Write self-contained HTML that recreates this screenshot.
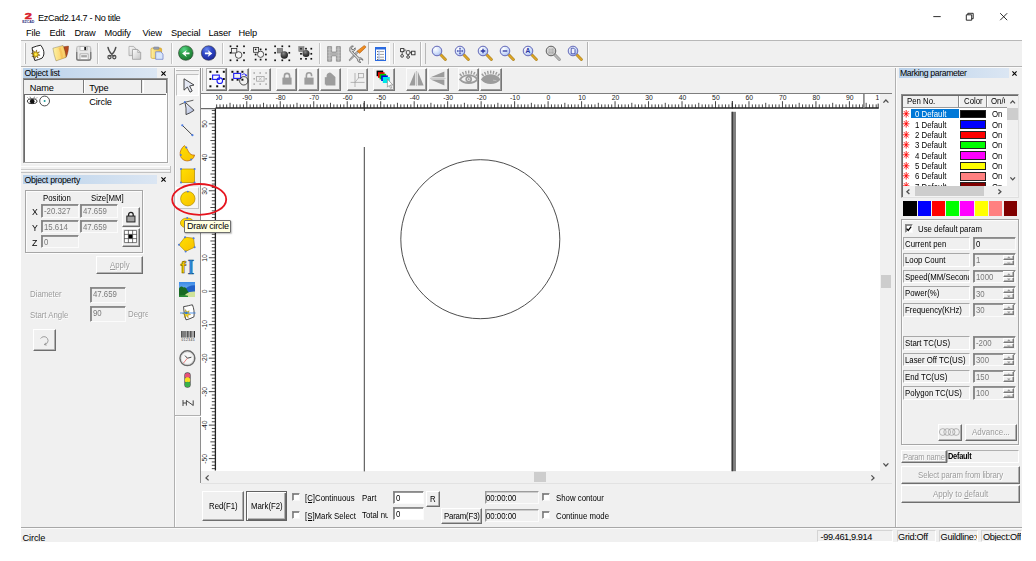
<!DOCTYPE html><html><head><meta charset="utf-8"><title>EzCad2.14.7 - No title</title><style>
html,body{margin:0;padding:0;}
body{width:1036px;height:561px;background:#fff;position:relative;overflow:hidden;font-family:"Liberation Sans",sans-serif;font-size:8.4px;color:#000;}
.a{position:absolute;}
.t{position:absolute;white-space:nowrap;line-height:1;}
.ui{font-family:"Liberation Sans",sans-serif;font-size:9.25px;letter-spacing:-0.15px;}
.ms{font-family:"Liberation Sans",sans-serif;font-size:8.6px;transform:scaleX(0.91);transform-origin:0 0;}
.dis{color:#9a9a9a;text-shadow:0.7px 0.7px 0 #fff;}
.gr{color:#7a7a7a;}
.sunk{position:absolute;box-sizing:border-box;border:1px solid;border-color:#9a9a9a #fff #fff #9a9a9a;box-shadow:inset 0.7px 0.7px 0 #6a6a6a;}
.inp{position:absolute;box-sizing:border-box;border:1px solid;border-color:#8a8a8a #fbfbfb #fbfbfb #8a8a8a;box-shadow:inset 0.8px 0.8px 0 #777;background:#f0f0f0;overflow:hidden;}
.inp.w{background:#fff;}
.inp span{position:absolute;left:2px;top:2.2px;white-space:nowrap;line-height:1;}
.btn{position:absolute;box-sizing:border-box;border:1px solid;border-color:#fff #6e6e6e #6e6e6e #fff;background:#f0f0f0;box-shadow:inset -0.8px -0.8px 0 #a0a0a0;text-align:center;white-space:nowrap;overflow:hidden;}
.lbl{position:absolute;box-sizing:border-box;border:1px solid;border-color:#a8a8a8 #fff #fff #a8a8a8;overflow:hidden;white-space:nowrap;}
.lbl span{position:absolute;left:1px;top:2.0px;line-height:1;}
.grp{position:absolute;box-sizing:border-box;border:1px solid #a6a6a6;box-shadow:0.8px 0.8px 0 #fff, inset 0.8px 0.8px 0 #fff;}
.cap{position:absolute;height:9.4px;background:linear-gradient(90deg,#b9d1ea 0%,#c9dbee 45%,#dbe6f3 100%);}
.cap span{position:absolute;left:1px;top:0.9px;line-height:1;white-space:nowrap;font-size:8.7px;letter-spacing:-0.25px;}
.hl{position:absolute;height:1px;}
.vl{position:absolute;width:1px;}
svg{position:absolute;overflow:visible;}
</style></head><body>
<div class="a" style="left:21px;top:40px;width:1001px;height:502px;background:#f0f0f0"></div>
<svg style="left:22px;top:10px" width="13" height="13" viewBox="0 0 13 13"><text transform="translate(6.4 8.8) scale(1.45 1)" x="0" y="0" text-anchor="middle" font-family="Liberation Sans" font-weight="bold" font-size="8.8" fill="#d8202c" stroke="#d8202c" stroke-width="0.5">2</text><text x="0.2" y="12.7" font-family="Liberation Sans" font-weight="bold" font-size="3.9" fill="#2a2a7a" textLength="12.2" lengthAdjust="spacingAndGlyphs">EZCAD</text></svg>
<div class="t ui" style="left:38px;top:13.9px;font-size:9.1px;letter-spacing:-0.3px">EzCad2.14.7 - No title</div>
<svg style="left:925px;top:8px" width="90" height="18" viewBox="0 0 90 18"><g stroke="#161616" stroke-width="0.9" fill="none"><path d="M8.3 8.6h7.4"/><path d="M41.3 6.8h5.4v5.4h-5.4z"/><path d="M42.8 6.8v-1.5h5.4v5.4h-1.5"/><path d="M75.2 5.2l7 7M82.2 5.2l-7 7"/></g></svg>
<div class="t ui" style="left:26px;top:28.5px;">File</div>
<div class="t ui" style="left:49.5px;top:28.5px;">Edit</div>
<div class="t ui" style="left:74.5px;top:28.5px;">Draw</div>
<div class="t ui" style="left:104.5px;top:28.5px;">Modify</div>
<div class="t ui" style="left:142.5px;top:28.5px;">View</div>
<div class="t ui" style="left:171px;top:28.5px;">Special</div>
<div class="t ui" style="left:208.5px;top:28.5px;">Laser</div>
<div class="t ui" style="left:238.5px;top:28.5px;">Help</div>
<div class="a" style="left:21px;top:40px;width:1001px;height:1px;background:#b8b8b8"></div>
<div class="a" style="left:21px;top:66px;width:1001px;height:1px;background:#b4b4b4"></div>
<div class="a" style="left:21px;top:67px;width:1001px;height:1px;background:#fafafa"></div>
<div class="cap" style="left:23.4px;top:68.2px;width:133.4px;height:9.4px;"><span class="ui">Object list</span></div>
<svg style="left:160.8px;top:71px" width="5" height="5" viewBox="0 0 5 5"><path d="M0.4 0.4l4.2 4.2M4.6 0.4l-4.2 4.2" stroke="#000" stroke-width="1.1"/></svg>
<div class="a" style="left:22.8px;top:78.2px;width:145.3px;height:84.6px;background:#fff;border:1px solid;border-color:#8c8c8c #a8a8a8 #a8a8a8 #8c8c8c;box-sizing:border-box;box-shadow:inset 1px 1px 0 #6a6a6a, 0.8px 0.8px 0 #fafafa"></div>
<div class="a" style="left:24.4px;top:80.4px;width:142px;height:13.4px;background:#f0f0f0"></div>
<div class="a" style="left:24.4px;top:93.6px;width:142px;height:1.2px;background:#6a6a6a"></div>
<div class="a" style="left:82.6px;top:80.4px;width:1.2px;height:13px;background:#7a7a7a"></div>
<div class="a" style="left:83.8px;top:80.4px;width:0.6px;height:13px;background:#fff"></div>
<div class="a" style="left:141.3px;top:80.4px;width:1.2px;height:13px;background:#7a7a7a"></div>
<div class="a" style="left:142.5px;top:80.4px;width:0.6px;height:13px;background:#fff"></div>
<div class="a" style="left:165.6px;top:80.4px;width:1px;height:13px;background:#7a7a7a"></div>
<div class="t ui" style="left:29.8px;top:84px;font-size:9.2px">Name</div>
<div class="t ui" style="left:89.2px;top:84px;font-size:9.2px">Type</div>
<div class="t ui" style="left:89.2px;top:98px;font-size:9.2px">Circle</div>
<svg style="left:27.4px;top:96px" width="24" height="11" viewBox="0 0 24 11"><ellipse cx="5.2" cy="5.2" rx="4.8" ry="2.4" fill="none" stroke="#111" stroke-width="0.9"/><circle cx="5.2" cy="5.2" r="2.3" fill="#111"/><path d="M1.5 2.5l-1-1M3.5 1.9l-.5-1.2M7 1.9l.5-1.2M9 2.5l1-1" stroke="#111" stroke-width="0.6"/><circle cx="17.6" cy="5" r="4.9" fill="#fff" stroke="#222" stroke-width="0.8"/><circle cx="17.6" cy="5" r="1" fill="#1a9a9a"/></svg>
<div class="a" style="left:21px;top:166px;width:150px;height:1px;background:#fdfdfd"></div>
<div class="a" style="left:21px;top:169px;width:150px;height:0.9px;background:#cccccc"></div>
<div class="a" style="left:21px;top:170px;width:150px;height:0.9px;background:#fbfbfb"></div>
<div class="a" style="left:21px;top:172px;width:150px;height:0.9px;background:#c2c2c2"></div>
<div class="a" style="left:170.4px;top:166px;width:0.9px;height:6.8px;background:#c0c0c0"></div>
<div class="cap" style="left:23.4px;top:175px;width:133.8px;height:9.4px;"><span class="ui">Object property</span></div>
<svg style="left:160.8px;top:177.2px" width="5" height="5" viewBox="0 0 5 5"><path d="M0.4 0.4l4.2 4.2M4.6 0.4l-4.2 4.2" stroke="#000" stroke-width="1.1"/></svg>
<div class="grp" style="left:24.5px;top:189.6px;width:118.6px;height:63px;"></div>
<div class="t ms" style="left:42.8px;top:194.2px;">Position</div>
<div class="t ms" style="left:91px;top:194.2px;">Size[MM]</div>
<div class="t ms" style="left:31.6px;top:207.4px;font-size:9.6px">X</div>
<div class="t ms" style="left:31.6px;top:222.6px;font-size:9.6px">Y</div>
<div class="t ms" style="left:31.8px;top:237.8px;font-size:9.6px">Z</div>
<div class="inp" style="left:40.5px;top:204.2px;width:38.4px;height:13.4px"><span class="ms gr">-20.327</span></div>
<div class="inp" style="left:80px;top:204.2px;width:38.4px;height:13.4px"><span class="ms gr">47.659</span></div>
<div class="inp" style="left:40.5px;top:219.6px;width:38.4px;height:13.4px"><span class="ms gr">15.614</span></div>
<div class="inp" style="left:80px;top:219.6px;width:38.4px;height:13.4px"><span class="ms gr">47.659</span></div>
<div class="inp" style="left:40.5px;top:235px;width:38.4px;height:13.4px"><span class="ms gr">0</span></div>
<div class="btn" style="left:122px;top:207.2px;width:17.8px;height:19.6px;"></div>
<svg style="left:126.4px;top:210.6px" width="10" height="12" viewBox="0 0 10 12"><path d="M2.6 5.2V3.6a2.3 2.3 0 0 1 4.6 0V5.2" fill="none" stroke="#222" stroke-width="1.3"/><rect x="0.8" y="5" width="8.2" height="6" fill="#8a8a8a" stroke="#222" stroke-width="0.9"/><path d="M1.6 7h6.6M1.6 9h6.6" stroke="#ddd" stroke-width="0.6"/></svg>
<div class="btn" style="left:122px;top:228px;width:17.8px;height:19.4px;"></div>
<svg style="left:124.2px;top:230px" width="13" height="13" viewBox="0 0 13 13"><rect x="0" y="0" width="13" height="13" fill="#fff"/><path d="M0.4 0.4h12.2v12.2h-12.2zM4.4 0v13M8.6 0v13M0 4.4h13M0 8.6h13" fill="none" stroke="#555" stroke-width="0.8"/><rect x="4.6" y="4.6" width="3.8" height="3.8" fill="#000"/></svg>
<div class="btn" style="left:96.2px;top:255.6px;width:47px;height:18.2px;"></div>
<div class="t ms dis" style="left:109.6px;top:260.6px;"><u>A</u>pply</div>
<div class="t ms dis" style="left:29.6px;top:290.4px;">Diameter</div>
<div class="inp" style="left:89.6px;top:287px;width:36.4px;height:16px"><span class="ms gr">47.659</span></div>
<div class="t ms dis" style="left:29.6px;top:311px;">Start Angle</div>
<div class="inp" style="left:89.6px;top:305.8px;width:36.4px;height:16px"><span class="ms gr">90</span></div>
<div class="a" style="left:128px;top:309.6px;width:19.5px;height:10px;overflow:hidden"><div class="t ms dis" style="left:0;top:0.6px">Degree</div></div>
<div class="btn" style="left:33px;top:328.8px;width:22.6px;height:22.4px;"></div>
<svg style="left:39px;top:335px" width="11" height="11" viewBox="0 0 11 11"><path d="M1.6 3.6A4 4 0 1 1 5.4 9.6" fill="none" stroke="#8a8a8a" stroke-width="0.8"/><path d="M5.4 9.6l1.6-2M5.4 9.6l2.2 0.6" fill="none" stroke="#8a8a8a" stroke-width="0.8"/></svg>
<div class="a" style="left:173.9px;top:68px;width:0.9px;height:459px;background:#b0b0b0"></div>
<div class="a" style="left:174.8px;top:68px;width:0.7px;height:459px;background:#fcfcfc"></div>
<div class="a" style="left:24px;top:42.6px;width:0.8px;height:21.5px;background:#fdfdfd"></div>
<div class="a" style="left:24.8px;top:42.6px;width:0.8px;height:21.5px;background:#b8b8b8"></div>
<svg style="left:24px;top:40px" width="80" height="28" viewBox="24 40 80 28"><defs><linearGradient id="fy" x1="0" y1="0" x2="1" y2="0"><stop offset="0" stop-color="#fdf3a4"/><stop offset="0.55" stop-color="#fbd978"/><stop offset="1" stop-color="#f7c964"/></linearGradient><linearGradient id="sv" x1="0" y1="0" x2="0" y2="1"><stop offset="0" stop-color="#c8c8c8"/><stop offset="1" stop-color="#8c8c8c"/></linearGradient><radialGradient id="st"><stop offset="0" stop-color="#fff27a"/><stop offset="0.45" stop-color="#f4cc00"/><stop offset="1" stop-color="#a06a00"/></radialGradient></defs>
<path d="M32.1 47.7C35 46.6 38 45.6 40.6 45.2C42.8 47.6 44.2 51 43.9 54C43.7 55.800 43 57.2 42.1 58.1C39.800 59.2 37.2 60.100 34.800 60.5C34.2 58.800 33.6 57 33.300 55.4C32.800 52.800 32.3 50 32.1 47.7z" fill="#fff" stroke="#1a1a1a" stroke-width="0.950" stroke-linejoin="round"/>
<path d="M36.64 49.90L36.78 52.73L39.47 51.85L37.57 53.95L40.10 55.24L37.27 55.38L38.15 58.07L36.05 56.17L34.76 58.70L34.62 55.87L31.93 56.75L33.83 54.65L31.30 53.36L34.13 53.22L33.25 50.53L35.35 52.43z" fill="url(#st)" stroke="#5a3a00" stroke-width="0.45"/>
<path d="M63.6 46.7L68.5 46.100C68.6 49.800 67.800 53.6 66.4 56.800L64 57.6z" fill="#b5481f" stroke="#6e2a10" stroke-width="0.4"/>
<path d="M52.900 48.2L63 45.4C64.6 49.2 65.700 53.300 66.100 57.4L56 60.900C54.6 56.800 53.5 52.5 52.900 48.2z" fill="url(#fy)" stroke="#3a3010" stroke-opacity="0.55" stroke-width="0.5" stroke-linejoin="round"/>
<path d="M59.5 47.6C61 51.2 61.900 55 62.2 58.6" fill="none" stroke="#f5b84a" stroke-opacity="0.6" stroke-width="2.2"/>
<rect x="76.700" y="46.4" width="14" height="13.800" rx="1.800" fill="#e8e8e8" stroke="url(#sv)" stroke-width="1.300"/>
<path d="M76.700 52V58.400a1.800 1.800 0 0 0 1.800 1.800h10.400a1.800 1.800 0 0 0 1.800-1.800V52" fill="none" stroke="#7c7c7c" stroke-width="1.300"/>
<rect x="80" y="46.700" width="7.400" height="4" fill="#fafafa" stroke="#9a9a9a" stroke-width="0.5"/>
<rect x="84.300" y="47" width="1.900" height="3.100" fill="#1a1a1a"/>
<rect x="80" y="53.900" width="8.100" height="5.500" fill="#fbfbfb" stroke="#8a8a8a" stroke-width="0.6"/>
<rect x="81.200" y="55.100" width="5.700" height="2.300" fill="#a8a8a8"/></svg>
<div class="a" style="left:96.7px;top:43px;width:0.9px;height:21px;background:#c4c4c4"></div>
<div class="a" style="left:97.60000000000001px;top:43px;width:0.7px;height:21px;background:#fdfdfd"></div>
<svg style="left:96px;top:40px" width="80" height="28" viewBox="96 40 80 28"><defs><linearGradient id="pg" x1="0" y1="0" x2="1" y2="1"><stop offset="0" stop-color="#fdfdfd"/><stop offset="1" stop-color="#c4c4c4"/></linearGradient><linearGradient id="cb" x1="0" y1="0" x2="1" y2="0"><stop offset="0" stop-color="#fff2a8"/><stop offset="1" stop-color="#e6b42c"/></linearGradient></defs>
<path d="M108 47.400C108.800 51 110.600 53.800 114 56M115.800 47.400C115 51 113.200 53.800 109.800 56" fill="none" stroke="#4c4c4c" stroke-width="1.500" stroke-linecap="round"/>
<ellipse cx="109.500" cy="57.100" rx="1.600" ry="1.700" fill="none" stroke="#4c4c4c" stroke-width="1.200"/><ellipse cx="114.300" cy="57.100" rx="1.600" ry="1.700" fill="none" stroke="#4c4c4c" stroke-width="1.200"/>
<path d="M129 46.400h4.600l2.600 2.600v6.600h-7.200z" fill="url(#pg)" stroke="#a4a4a4" stroke-width="0.800"/>
<path d="M132.500 49.500h5.200l3 3v6.800h-8.200z" fill="url(#pg)" stroke="#9c9c9c" stroke-width="0.800"/><path d="M137.700 49.500v3h3" fill="none" stroke="#9c9c9c" stroke-width="0.600"/>
<rect x="151" y="48" width="10.600" height="10.400" rx="1.300" fill="url(#cb)" stroke="#d0a030" stroke-width="0.700"/>
<rect x="153.600" y="47" width="5.400" height="2.300" rx="0.700" fill="#98a0b4" stroke="#6c7488" stroke-width="0.500"/>
<path d="M155.700 51.800h5l2.300 2.300v5.200h-7.300z" fill="#d8e6fb" stroke="#7484cc" stroke-width="0.800"/></svg>
<div class="a" style="left:170.9px;top:43px;width:0.9px;height:21px;background:#c4c4c4"></div>
<div class="a" style="left:171.8px;top:43px;width:0.7px;height:21px;background:#fdfdfd"></div>
<svg style="left:170px;top:40px" width="60" height="28" viewBox="170 40 60 28"><defs><radialGradient id="gg" cx="38%" cy="25%" r="75%"><stop offset="0" stop-color="#58d88a"/><stop offset="0.45" stop-color="#2fa04a"/><stop offset="1" stop-color="#1c7a34"/></radialGradient><radialGradient id="gb" cx="38%" cy="25%" r="75%"><stop offset="0" stop-color="#6a8af0"/><stop offset="0.45" stop-color="#3048c8"/><stop offset="1" stop-color="#1c2a9c"/></radialGradient></defs>
<circle cx="185.800" cy="53.050" r="7.300" fill="url(#gg)" stroke="#2a3a2a" stroke-width="0.600"/>
<path d="M182.100 53.400L186.700 49.900L185.600 52.500H189.500V54.300H185.600L186.700 56.900z" fill="#fff"/>
<circle cx="208.600" cy="53.050" r="7.300" fill="url(#gb)" stroke="#2a2a3a" stroke-width="0.600"/>
<path d="M212.300 53.400L207.700 49.900L208.800 52.500H204.900V54.300H208.800L207.700 56.900z" fill="#fff"/></svg>
<div class="a" style="left:222.0px;top:43px;width:0.9px;height:21px;background:#c4c4c4"></div>
<div class="a" style="left:222.9px;top:43px;width:0.7px;height:21px;background:#fdfdfd"></div>
<svg style="left:222px;top:40px" width="100" height="28" viewBox="222 40 100 28"><defs><radialGradient id="sp" cx="40%" cy="30%" r="70%"><stop offset="0" stop-color="#8a8a8a"/><stop offset="0.5" stop-color="#4a4a4a"/><stop offset="1" stop-color="#1e1e1e"/></radialGradient></defs><rect x="229.65" y="45.45" width="1.70" height="1.70" fill="#111"/><rect x="229.65" y="51.95" width="1.70" height="1.70" fill="#111"/><rect x="229.65" y="59.45" width="1.70" height="1.70" fill="#111"/><rect x="236.35" y="45.45" width="1.70" height="1.70" fill="#111"/><rect x="236.35" y="59.45" width="1.70" height="1.70" fill="#111"/><rect x="243.15" y="45.45" width="1.70" height="1.70" fill="#111"/><rect x="243.15" y="51.95" width="1.70" height="1.70" fill="#111"/><rect x="243.15" y="59.45" width="1.70" height="1.70" fill="#111"/><rect x="231.400" y="48.400" width="5.400" height="4.600" fill="#f2f2f2" stroke="#2a2a2a" stroke-width="0.800"/><circle cx="238.600" cy="55" r="3.300" fill="#f6f6f6" stroke="#2a2a2a" stroke-width="0.800"/><rect x="254.75" y="48.55" width="1.70" height="1.70" fill="#111"/><rect x="254.75" y="53.65" width="1.70" height="1.70" fill="#111"/><rect x="254.75" y="58.75" width="1.70" height="1.70" fill="#111"/><rect x="259.75" y="48.55" width="1.70" height="1.70" fill="#111"/><rect x="259.75" y="58.75" width="1.70" height="1.70" fill="#111"/><rect x="265.05" y="48.55" width="1.70" height="1.70" fill="#111"/><rect x="265.05" y="53.65" width="1.70" height="1.70" fill="#111"/><rect x="265.05" y="58.75" width="1.70" height="1.70" fill="#111"/><rect x="253.600" y="47.400" width="5" height="4.900" fill="#f2f2f2" stroke="#2a2a2a" stroke-width="0.800"/><rect x="254.900" y="48.700" width="1.500" height="1.500" fill="#111"/><circle cx="260.600" cy="54.300" r="3.100" fill="#f6f6f6" stroke="#2a2a2a" stroke-width="0.800"/><rect x="274.25" y="45.45" width="1.70" height="1.70" fill="#111"/><rect x="274.25" y="51.95" width="1.70" height="1.70" fill="#111"/><rect x="274.25" y="59.45" width="1.70" height="1.70" fill="#111"/><rect x="281.45" y="45.45" width="1.70" height="1.70" fill="#111"/><rect x="281.45" y="59.45" width="1.70" height="1.70" fill="#111"/><rect x="288.45" y="45.45" width="1.70" height="1.70" fill="#111"/><rect x="288.45" y="51.95" width="1.70" height="1.70" fill="#111"/><rect x="288.45" y="59.45" width="1.70" height="1.70" fill="#111"/><rect x="277.200" y="48.300" width="5.500" height="4.700" fill="#8c8c8c" stroke="#5a5a5a" stroke-width="0.500"/><circle cx="284.300" cy="55" r="3.700" fill="url(#sp)"/><rect x="300.15" y="47.85" width="1.70" height="1.70" fill="#111"/><rect x="300.15" y="52.95" width="1.70" height="1.70" fill="#111"/><rect x="300.15" y="57.95" width="1.70" height="1.70" fill="#111"/><rect x="305.15" y="47.85" width="1.70" height="1.70" fill="#111"/><rect x="305.15" y="57.95" width="1.70" height="1.70" fill="#111"/><rect x="310.45" y="47.85" width="1.70" height="1.70" fill="#111"/><rect x="310.45" y="52.95" width="1.70" height="1.70" fill="#111"/><rect x="310.45" y="57.95" width="1.70" height="1.70" fill="#111"/><rect x="298.800" y="46.700" width="5.200" height="4.900" fill="#8c8c8c" stroke="#6a6a6a" stroke-width="0.500"/><rect x="300.200" y="47.900" width="1.600" height="1.600" fill="#222"/><circle cx="306" cy="53.500" r="3.500" fill="url(#sp)"/></svg>
<div class="a" style="left:319.0px;top:43px;width:0.9px;height:21px;background:#c4c4c4"></div>
<div class="a" style="left:319.9px;top:43px;width:0.7px;height:21px;background:#fdfdfd"></div>
<svg style="left:327px;top:45.6px" width="14" height="16" viewBox="0 0 14 16"><path d="M0.600 0.600h4v5.400h4.800v-5.400h4v14.600h-4v-5.400h-4.800v5.400h-4z" fill="#b0b0b0" stroke="#8a8a8a" stroke-width="0.800"/><path d="M0.600 3.400h4M0.600 6.400h4M0.600 9.400h4M0.600 12.400h4M9.400 3.400h4M9.400 6.400h4M9.400 9.400h4M9.400 12.400h4M2.600 .6v14.600M11.400 .6v14.600" stroke="#c8c8c8" stroke-width="0.500"/></svg>
<svg style="left:346px;top:42px" width="22" height="22" viewBox="346 42 22 22"><defs><linearGradient id="or" x1="0" y1="0" x2="1" y2="1"><stop offset="0" stop-color="#ffb040"/><stop offset="1" stop-color="#e06800"/></linearGradient></defs>
<path d="M358.400 52.300L350.600 59.900L349.500 60.700L349.300 59.700L357 51.200z" fill="#c8c8c8" stroke="#555" stroke-width="0.600"/>
<path d="M363.900 45.800a1.400 1.400 0 0 1 1.800 1.700L359.600 53.300L357.200 51z" fill="url(#or)" stroke="#a04c00" stroke-width="0.500"/>
<path d="M349.800 49.200a2.900 2.900 0 0 1 3.600-3.200l-1.900 1.900l.3 1.500l1.500.3l1.900-1.900a2.900 2.900 0 0 1-2.700 3.700l6.700 6.300a2.900 2.900 0 0 1 3.700 2.500l-1.900-1.300l-1.500.4l-.3 1.500l1.700 1.500a2.900 2.900 0 0 1-3.500-3.300l-6.500-6.700a2.900 2.900 0 0 1-1.100-3.200z" fill="#d8d8d8" stroke="#4a4a4a" stroke-width="0.700" stroke-linejoin="round"/></svg>
<div class="a" style="left:368.4px;top:42.4px;width:22px;height:22.8px;background:#f8f8f8;box-sizing:border-box;border:1px solid;border-color:#b8b8b8 #fff #fff #b8b8b8"></div>
<svg style="left:374.8px;top:47.2px" width="11" height="14" viewBox="0 0 11 14"><rect x="0.500" y="0.500" width="10" height="13" fill="#fff" stroke="#2a6ae0" stroke-width="1"/><rect x="0.500" y="0.500" width="10" height="2" fill="#2a6ae0"/><path d="M2 4.600h1.400M2 7.400h1.400M2 10.200h1.400M2 12.400h1.400" stroke="#333" stroke-width="0.800"/><path d="M4.600 4.600h4.400M4.600 7.400h4.400M4.600 10.200h4.400M4.600 12.400h4.400" stroke="#777" stroke-width="0.700"/><path d="M4 3.600v9.600" stroke="#2a6ae0" stroke-width="0.500"/></svg>
<div class="a" style="left:392.9px;top:43px;width:0.9px;height:21px;background:#c4c4c4"></div>
<div class="a" style="left:393.79999999999995px;top:43px;width:0.7px;height:21px;background:#fdfdfd"></div>
<svg style="left:398px;top:44px" width="20" height="18" viewBox="398 44 20 18"><g fill="#f6f6f6" stroke="#222" stroke-width="0.850"><path d="M402.200 51.700v2.800M404 50.100h2.200M408.100 54.300v1.300M410 52.600h1.500" fill="none" stroke-width="0.700"/><rect x="400.600" y="48.600" width="3.300" height="3.100"/><circle cx="402.100" cy="55.900" r="1.350"/><rect x="406.300" y="50.700" width="3.600" height="3.600" rx="0.900"/><circle cx="408.100" cy="57" r="1.350"/><rect x="411.600" y="51.200" width="3.400" height="3.600"/></g></svg>
<div class="a" style="left:420px;top:42px;width:0.8px;height:24px;background:#b8b8b8"></div>
<div class="a" style="left:420.8px;top:42px;width:0.7px;height:24px;background:#fdfdfd"></div>
<div class="a" style="left:424.6px;top:42.6px;width:0.8px;height:21.5px;background:#fdfdfd"></div>
<div class="a" style="left:425.4px;top:42.6px;width:0.8px;height:21.5px;background:#b8b8b8"></div>
<svg width="0" height="0" style="left:0;top:0"><defs><radialGradient id="ln" cx="35%" cy="30%" r="75%"><stop offset="0" stop-color="#ffffff"/><stop offset="0.55" stop-color="#d4e2fa"/><stop offset="1" stop-color="#a8bcf0"/></radialGradient><radialGradient id="lg" cx="35%" cy="30%" r="75%"><stop offset="0" stop-color="#ffffff"/><stop offset="1" stop-color="#d0d0d0"/></radialGradient></defs></svg>
<svg style="left:431.1px;top:45.2px" width="16" height="17" viewBox="0 0 16 17"><path d="M9.800 9.800l4.600 4.700" stroke="#9a7010" stroke-width="2.700" stroke-linecap="round"/><path d="M9.800 9.800l4.600 4.700" stroke="#dca628" stroke-width="1.800" stroke-linecap="round"/><circle cx="6" cy="6" r="4.800" fill="url(#ln)" stroke="#6468b8" stroke-width="1"/></svg>
<svg style="left:453.8px;top:45.2px" width="16" height="17" viewBox="0 0 16 17"><path d="M9.800 9.800l4.600 4.700" stroke="#9a7010" stroke-width="2.700" stroke-linecap="round"/><path d="M9.800 9.800l4.600 4.700" stroke="#dca628" stroke-width="1.800" stroke-linecap="round"/><circle cx="6" cy="6" r="4.800" fill="url(#ln)" stroke="#6468b8" stroke-width="1"/><path d="M6 3.200v5.600M3.400 6h5.200" stroke="#2a34a0" stroke-width="0.700" fill="none"/><path d="M6 2.600l-.9 1.200h1.800zM6 9.400l-.9-1.200h1.800zM2.800 6l1.300-.9v1.800zM9.200 6l-1.300-.9v1.800z" fill="#2a34a0"/></svg>
<svg style="left:476.5px;top:45.2px" width="16" height="17" viewBox="0 0 16 17"><path d="M9.800 9.800l4.600 4.700" stroke="#9a7010" stroke-width="2.700" stroke-linecap="round"/><path d="M9.800 9.800l4.600 4.700" stroke="#dca628" stroke-width="1.800" stroke-linecap="round"/><circle cx="6" cy="6" r="4.800" fill="url(#ln)" stroke="#6468b8" stroke-width="1"/><path d="M6 3.700v4.600M3.700 6h4.600" stroke="#2a34a0" stroke-width="1.300"/></svg>
<svg style="left:499.2px;top:45.2px" width="16" height="17" viewBox="0 0 16 17"><path d="M9.800 9.800l4.600 4.700" stroke="#9a7010" stroke-width="2.700" stroke-linecap="round"/><path d="M9.800 9.800l4.600 4.700" stroke="#dca628" stroke-width="1.800" stroke-linecap="round"/><circle cx="6" cy="6" r="4.800" fill="url(#ln)" stroke="#6468b8" stroke-width="1"/><path d="M3.700 6h4.600" stroke="#2a34a0" stroke-width="1.300"/></svg>
<svg style="left:521.9px;top:45.2px" width="16" height="17" viewBox="0 0 16 17"><path d="M9.800 9.800l4.600 4.700" stroke="#9a7010" stroke-width="2.700" stroke-linecap="round"/><path d="M9.800 9.800l4.600 4.700" stroke="#dca628" stroke-width="1.800" stroke-linecap="round"/><circle cx="6" cy="6" r="4.800" fill="url(#ln)" stroke="#6468b8" stroke-width="1"/><text x="6" y="8.300" text-anchor="middle" font-family="Liberation Sans" font-weight="bold" font-size="6.600" fill="#2a34a0">A</text></svg>
<svg style="left:544.6px;top:45.2px" width="16" height="17" viewBox="0 0 16 17"><path d="M9.800 9.800l4.600 4.700" stroke="#7a7a7a" stroke-width="2.700" stroke-linecap="round"/><path d="M9.800 9.800l4.600 4.700" stroke="#b8b8b8" stroke-width="1.800" stroke-linecap="round"/><circle cx="6" cy="6" r="4.800" fill="url(#lg)" stroke="#5c5c5c" stroke-width="1"/><path d="M4.200 2.600v6.800M6 2v8M7.800 2.600v6.800M2.600 4.200h6.800M2 6h8M2.600 7.800h6.800" stroke="#8a8a8a" stroke-width="0.500"/></svg>
<svg style="left:567.3px;top:45.2px" width="16" height="17" viewBox="0 0 16 17"><path d="M9.800 9.800l4.600 4.700" stroke="#9a7010" stroke-width="2.700" stroke-linecap="round"/><path d="M9.800 9.800l4.600 4.700" stroke="#dca628" stroke-width="1.800" stroke-linecap="round"/><circle cx="6" cy="6" r="4.800" fill="url(#ln)" stroke="#6468b8" stroke-width="1"/><path d="M4.200 3.200h2.600l1.200 1.200v4.400h-3.800z" fill="#eef2fc" stroke="#2a34a0" stroke-width="0.800"/></svg>
<div class="a" style="left:587.2px;top:42px;width:0.8px;height:24px;background:#b4b4b4"></div>
<div class="a" style="left:588px;top:42px;width:0.7px;height:24px;background:#fdfdfd"></div>
<div class="a" style="left:201.2px;top:68px;width:0.8px;height:23px;background:#fdfdfd"></div>
<div class="a" style="left:202px;top:68px;width:0.8px;height:23px;background:#b8b8b8"></div>
<div class="a" style="left:206px;top:67.6px;width:21.2px;height:23.4px;background:#fafafa;box-sizing:border-box;border:1px solid;border-color:#b4b4b4 #6e6e6e #6e6e6e #b4b4b4;box-shadow:inset -1px -1px 0 #9c9c9c"></div>
<svg style="left:206px;top:66px" width="66" height="26" viewBox="206 66 66 26"><rect x="209.40" y="70.80" width="2.00" height="2.00" fill="#111"/><rect x="209.40" y="78.00" width="2.00" height="2.00" fill="#111"/><rect x="209.40" y="85.30" width="2.00" height="2.00" fill="#111"/><rect x="216.20" y="70.80" width="2.00" height="2.00" fill="#111"/><rect x="216.20" y="85.30" width="2.00" height="2.00" fill="#111"/><rect x="222.80" y="70.80" width="2.00" height="2.00" fill="#111"/><rect x="222.80" y="78.00" width="2.00" height="2.00" fill="#111"/><rect x="222.80" y="85.30" width="2.00" height="2.00" fill="#111"/><rect x="212.600" y="75.100" width="6.700" height="4.300" fill="none" stroke="#1c1cf4" stroke-width="1.100"/><circle cx="219.800" cy="80.700" r="2.800" fill="none" stroke="#1c1cf4" stroke-width="1.100"/></svg>
<div class="btn" style="left:227.9px;top:67.6px;width:21.3px;height:23.4px;background:#f0f0f0;box-shadow:inset -1px -1px 0 #9c9c9c;border-color:#fcfcfc #777 #777 #fcfcfc"></div>
<svg style="left:206px;top:66px" width="66" height="26" viewBox="206 66 66 26"><rect x="231.40" y="70.80" width="2.00" height="2.00" fill="#111"/><rect x="231.40" y="78.70" width="2.00" height="2.00" fill="#111"/><rect x="236.60" y="70.80" width="2.00" height="2.00" fill="#111"/><rect x="236.60" y="78.70" width="2.00" height="2.00" fill="#111"/><rect x="241.40" y="70.80" width="2.00" height="2.00" fill="#111"/><rect x="241.40" y="78.70" width="2.00" height="2.00" fill="#111"/><rect x="233.700" y="73.400" width="7" height="5" fill="#f0f0f0" stroke="#1c1cf4" stroke-width="1.100"/><circle cx="243.800" cy="80.800" r="4.200" fill="none" stroke="#2a2a2a" stroke-width="0.850"/><path d="M242.200 74.800c1.200-1.300 2.700-1.300 3.900.3" fill="none" stroke="#1c1cf4" stroke-width="0.900"/><path d="M247 76.200l-2.100-.3l1.700-1.600z" fill="#1c1cf4"/></svg>
<div class="btn" style="left:250px;top:67.6px;width:21.3px;height:23.4px;background:#f0f0f0;box-shadow:inset -1px -1px 0 #9c9c9c;border-color:#fcfcfc #777 #777 #fcfcfc"></div>
<svg style="left:206px;top:66px" width="66" height="26" viewBox="206 66 66 26"><rect x="253.45" y="72.25" width="1.50" height="1.50" fill="#a4a4a4"/><rect x="253.45" y="78.05" width="1.50" height="1.50" fill="#a4a4a4"/><rect x="253.45" y="83.35" width="1.50" height="1.50" fill="#a4a4a4"/><rect x="259.45" y="72.25" width="1.50" height="1.50" fill="#a4a4a4"/><rect x="259.45" y="83.35" width="1.50" height="1.50" fill="#a4a4a4"/><rect x="265.35" y="72.25" width="1.50" height="1.50" fill="#a4a4a4"/><rect x="265.35" y="78.05" width="1.50" height="1.50" fill="#a4a4a4"/><rect x="265.35" y="83.35" width="1.50" height="1.50" fill="#a4a4a4"/><rect x="256.600" y="76.400" width="7.500" height="4.800" fill="none" stroke="#a4a4a4" stroke-width="0.800"/><path d="M258.800 77.400l3 2.800M261.800 77.400l-3 2.800" stroke="#a4a4a4" stroke-width="0.600"/></svg>
<div class="btn" style="left:275.9px;top:67.6px;width:21.3px;height:23.4px;background:#f0f0f0;box-shadow:inset -1px -1px 0 #9c9c9c;border-color:#fcfcfc #777 #777 #fcfcfc"></div>
<svg style="left:281.6px;top:72.4px" width="10" height="13" viewBox="0 0 10 13"><path d="M2.400 6V4a2.600 2.600 0 0 1 5.200 0V6" fill="none" stroke="#9c9c9c" stroke-width="1.600"/><rect x="0.400" y="5.600" width="9.200" height="7" fill="#9c9c9c"/></svg>
<div class="btn" style="left:297.9px;top:67.6px;width:21.3px;height:23.4px;background:#f0f0f0;box-shadow:inset -1px -1px 0 #9c9c9c;border-color:#fcfcfc #777 #777 #fcfcfc"></div>
<svg style="left:303.6px;top:72.4px" width="10" height="13" viewBox="0 0 10 13"><path d="M2.400 6V3.400a2.600 2.600 0 0 1 5.200 0V4.200" fill="none" stroke="#9c9c9c" stroke-width="1.600"/><rect x="0.400" y="5.600" width="9.200" height="7" fill="#9c9c9c"/></svg>
<div class="btn" style="left:320px;top:67.6px;width:21.3px;height:23.4px;background:#f0f0f0;box-shadow:inset -1px -1px 0 #9c9c9c;border-color:#fcfcfc #777 #777 #fcfcfc"></div>
<svg style="left:324px;top:71px" width="14" height="15" viewBox="0 0 14 15"><path d="M2.600 7V4.600a3 3 0 0 1 5-2.200l3.800 3.600v8.400h-9.600z" fill="#9c9c9c"/><path d="M0.800 6.200h6.400v7.400h-6.400z" fill="#9c9c9c"/></svg>
<div class="btn" style="left:347px;top:67.6px;width:21.3px;height:23.4px;background:#f0f0f0;box-shadow:inset -1px -1px 0 #9c9c9c;border-color:#fcfcfc #777 #777 #fcfcfc"></div>
<svg style="left:350px;top:70.8px" width="16" height="17" viewBox="0 0 16 17"><path d="M5 2v14M0.600 11.400h14" stroke="#9c9c9c" stroke-width="0.700"/><rect x="8.600" y="2.400" width="5" height="4.400" fill="none" stroke="#9c9c9c" stroke-width="0.700"/><path d="M5 11.400l3.600-4.600" stroke="#9c9c9c" stroke-width="0.600"/></svg>
<div class="btn" style="left:373.3px;top:67.6px;width:21.3px;height:23.4px;background:#f0f0f0;box-shadow:inset -1px -1px 0 #9c9c9c;border-color:#fcfcfc #777 #777 #fcfcfc"></div>
<svg style="left:375.8px;top:69.8px" width="18" height="19" viewBox="0 0 18 19"><rect x="0.600" y="0.600" width="6.600" height="5.600" fill="#000"/><rect x="2" y="2.200" width="6.600" height="5.600" fill="#f00000"/><rect x="3.600" y="3.800" width="6.600" height="5.600" fill="#00c800"/><rect x="5.200" y="5.400" width="6.600" height="5.600" fill="#0000e0"/><rect x="6.800" y="7" width="7" height="6" fill="#00e8e8"/><path d="M11.400 9v8.200l1.800-1.800l1.400 3l1.200-.6l-1.400-2.800h2.400z" fill="#fff" stroke="#777" stroke-width="0.600"/></svg>
<div class="btn" style="left:405.8px;top:67.6px;width:21.3px;height:23.4px;background:#f0f0f0;box-shadow:inset -1px -1px 0 #9c9c9c;border-color:#fcfcfc #777 #777 #fcfcfc"></div>
<svg style="left:409.4px;top:71.2px" width="15" height="15" viewBox="0 0 15 15"><path d="M6.200 0.600v13.800h-5.800z" fill="#9c9c9c"/><path d="M8.800 0.600v13.800h5.800z" fill="#9c9c9c"/><path d="M7.500 0v15" stroke="#9c9c9c" stroke-width="0.500"/></svg>
<div class="btn" style="left:427.5px;top:67.6px;width:21.3px;height:23.4px;background:#f0f0f0;box-shadow:inset -1px -1px 0 #9c9c9c;border-color:#fcfcfc #777 #777 #fcfcfc"></div>
<svg style="left:430.4px;top:71.4px" width="16" height="15" viewBox="0 0 16 15"><path d="M14.400 0.400v5.800h-13.800z" fill="#9c9c9c"/><path d="M14.400 14.400v-5.800h-13.800z" fill="#9c9c9c"/><path d="M0 7.400h15.600" stroke="#9c9c9c" stroke-width="0.500"/></svg>
<div class="btn" style="left:457.8px;top:67.6px;width:21.3px;height:23.4px;background:#f0f0f0;box-shadow:inset -1px -1px 0 #9c9c9c;border-color:#fcfcfc #777 #777 #fcfcfc"></div>
<svg style="left:459px;top:70px" width="20" height="16" viewBox="0 0 20 16"><path d="M1 9.400c4-5.600 13.400-5.600 17.400 0c-4 4.800-13.400 4.800-17.400 0z" fill="none" stroke="#9c9c9c" stroke-width="1.800"/><circle cx="9.700" cy="9.200" r="2.500" fill="none" stroke="#9c9c9c" stroke-width="1.700"/><circle cx="9.700" cy="9.200" r="0.900" fill="#9c9c9c"/><path d="M2.6 6l-1.800-2.300M4.800 4.600l-1.300-2.600M7.200 3.800l-.6-2.900M9.700 3.500v-3M12.200 3.800l.6-2.900M14.600 4.600l1.300-2.600M16.800 6l1.800-2.300" stroke="#9c9c9c" stroke-width="1.400"/></svg>
<div class="btn" style="left:480.3px;top:67.6px;width:21.3px;height:23.4px;background:#f0f0f0;box-shadow:inset -1px -1px 0 #9c9c9c;border-color:#fcfcfc #777 #777 #fcfcfc"></div>
<svg style="left:481.4px;top:70px" width="20" height="16" viewBox="0 0 20 16"><path d="M1 9.400c4-5.600 13.400-5.600 17.400 0c-4 4.800-13.400 4.800-17.400 0z" fill="#9c9c9c" stroke="#9c9c9c" stroke-width="1.800"/><path d="M2.6 6l-1.800-2.300M4.800 4.600l-1.300-2.600M7.200 3.800l-.6-2.900M9.700 3.500v-3M12.200 3.800l.6-2.900M14.600 4.600l1.300-2.600M16.800 6l1.800-2.300" stroke="#9c9c9c" stroke-width="1.400"/><path d="M12 10.200l3.400.5" stroke="#d0d0d0" stroke-width="0.600"/></svg>
<div class="a" style="left:200px;top:68px;width:0.9px;height:415.4px;background:#8e8e8e"></div>
<div class="a" style="left:174.5px;top:415px;width:26px;height:0.8px;background:#b0b0b0"></div>
<div class="a" style="left:174.5px;top:415.8px;width:26px;height:0.7px;background:#fcfcfc"></div>
<div class="a" style="left:176.2px;top:69.4px;width:22.4px;height:0.8px;background:#fdfdfd"></div>
<div class="a" style="left:176.2px;top:70.2px;width:22.4px;height:0.8px;background:#b8b8b8"></div>
<div class="a" style="left:176.2px;top:73.6px;width:22.4px;height:22.2px;background:#f7f7f7;box-sizing:border-box;border:1px solid;border-color:#c0c0c0 #fff #fff #c0c0c0"></div>
<svg style="left:182.6px;top:78px" width="12" height="15" viewBox="0 0 12 15"><path d="M1 0.800l10 6.200l-4.400 1l2.600 5l-2.200 1.200l-2.600-5.200l-3.400 3.200z" fill="#e4e8f4" stroke="#333" stroke-width="0.900" stroke-linejoin="round"/></svg>
<svg style="left:176px;top:96px" width="24" height="22" viewBox="176 96 24 22"><defs><linearGradient id="ne" x1="0" y1="0" x2="1" y2="1"><stop offset="0" stop-color="#f4f6fc"/><stop offset="1" stop-color="#a8b4d8"/></linearGradient></defs><path d="M179.400 104.800Q185.200 101.600 193.400 100.200" fill="none" stroke="#3a3a3a" stroke-width="0.800"/><path d="M184.900 102L194.100 110.300Q190.200 113.200 186 114.600Q186.600 108 184.900 102z" fill="url(#ne)" stroke="#333" stroke-width="0.850" stroke-linejoin="round"/><circle cx="184.900" cy="102" r="1" fill="#4a7ae0"/></svg>
<svg style="left:181px;top:124px" width="13" height="13" viewBox="0 0 13 13"><path d="M1.200 1.200l10.200 10" stroke="#333" stroke-width="0.900"/><circle cx="1.300" cy="1.300" r="1.100" fill="#4a7ae0"/><circle cx="11.400" cy="11.200" r="1.100" fill="#4a7ae0"/></svg>
<svg style="left:176px;top:142px" width="24" height="22" viewBox="176 142 24 22"><defs><linearGradient id="yg" x1="0" y1="0" x2="1" y2="1"><stop offset="0" stop-color="#ffe000"/><stop offset="1" stop-color="#f8c000"/></linearGradient></defs><path d="M184.300 145.600C181.500 148 179.600 151.500 180.200 155C180.800 158.600 184 161 187.600 160.900C191 160.800 194 158.500 194.600 155C192 155.500 189.800 154 188.600 151.800C187.400 149.800 186.600 147.200 184.300 145.600z" fill="url(#yg)" stroke="#b85a10" stroke-width="0.700"/><circle cx="186.300" cy="147.600" r="1" fill="#4a7ae0"/><circle cx="180.800" cy="155" r="1" fill="#4a7ae0"/><circle cx="191.200" cy="159.600" r="1" fill="#4a7ae0"/></svg>
<svg style="left:179.6px;top:168.4px" width="16" height="16" viewBox="0 0 16 16"><rect x="1" y="1" width="13.600" height="13.600" fill="url(#yg)" stroke="#b08a00" stroke-width="0.700"/><circle cx="1" cy="1" r="1" fill="#4a7ae0"/><circle cx="14.600" cy="1" r="1" fill="#4a7ae0"/><circle cx="1" cy="14.600" r="1" fill="#4a7ae0"/><circle cx="14.600" cy="14.600" r="1" fill="#4a7ae0"/></svg>
<div class="a" style="left:176.2px;top:186.6px;width:22.4px;height:22.6px;background:#f6f6f6;box-sizing:border-box;border:1px solid;border-color:#fff #c4c4c4 #c4c4c4 #fff"></div>
<svg style="left:180px;top:191px" width="16" height="16" viewBox="0 0 16 16"><circle cx="7.800" cy="7.700" r="7.200" fill="url(#yg)" stroke="#b08a00" stroke-width="0.700"/><circle cx="7.800" cy="0.600" r="0.900" fill="#4a7ae0"/></svg>
<svg style="left:180px;top:216.6px" width="15" height="12" viewBox="0 0 15 12"><ellipse cx="7.200" cy="6" rx="6.800" ry="5" fill="url(#yg)" stroke="#b08a00" stroke-width="0.700"/><circle cx="7.200" cy="1" r="0.900" fill="#4a7ae0"/></svg>
<svg style="left:178.4px;top:236px" width="18" height="17" viewBox="0 0 18 17"><path d="M1 8.800l6-7.600l8.600 1l1 9l-9 4.200z" fill="url(#yg)" stroke="#b08a00" stroke-width="0.700"/><circle cx="7" cy="1.200" r="1" fill="#4a7ae0"/><circle cx="15.600" cy="2.200" r="1" fill="#4a7ae0"/><circle cx="1" cy="8.800" r="1" fill="#4a7ae0"/><circle cx="16.600" cy="11.200" r="1" fill="#4a7ae0"/><circle cx="7.600" cy="15.400" r="1" fill="#4a7ae0"/></svg>
<svg style="left:178px;top:256px" width="20" height="20" viewBox="178 256 20 20"><text x="180.600" y="272.800" font-family="Liberation Sans" font-weight="bold" font-size="16.500" fill="#f6c800" stroke="#4a3a00" stroke-width="0.450">f</text><text transform="translate(190.900 273.600) scale(0.740 1)" x="0" y="0" text-anchor="middle" font-family="Liberation Serif" font-weight="bold" font-size="22" fill="#2a8cdc" stroke="#0a3a6a" stroke-width="0.450">I</text></svg>
<svg style="left:179.4px;top:282px" width="16" height="15" viewBox="0 0 16 15"><defs><linearGradient id="sky" x1="0" y1="0" x2="0" y2="1"><stop offset="0" stop-color="#3a8ae8"/><stop offset="1" stop-color="#a8d4f8"/></linearGradient></defs><rect x="0" y="0" width="16" height="15" fill="url(#sky)"/><path d="M5 8c3-3 7-5 11-4.600v6.600h-11z" fill="#2060c8"/><path d="M0 6.400c1.400-2 3-2.400 4.400-.8c1.600-1 3 .4 3.600 2.400l2.600 3.600l-4 3.400h-6.600z" fill="#186a24"/><path d="M7 12c3-2 6-2.600 9-2.400v5.400h-12z" fill="#cfe39a"/><path d="M0 13.600c3-.8 6-.8 9 .2v1.200h-9z" fill="#2a8a34"/></svg>
<svg style="left:180px;top:304px" width="16" height="17" viewBox="0 0 16 17"><path d="M3.600 2.600C7 2.200 10 1.200 12.400 .8c1.600 3.400 2 8 1.600 12c-2.400 1.200-5.600 2.600-8 3c-1.400-4-2.200-8.600-2.400-13.200z" fill="#fff" stroke="#222" stroke-width="0.800"/><path d="M5.600 5.600l1.200 2.400l2.400-1.200l-1 2.400l2.400 1.400l-2.600.4l.2 2.800l-1.800-2l-2.200 1.600l.8-2.600l-2.400-1.200l2.600-.6z" fill="#f8d820" stroke="#8a6a00" stroke-width="0.400"/><path d="M0 9h15.600" stroke="#2a7ae0" stroke-width="0.800"/><circle cx="6.400" cy="9" r="1.200" fill="#2a7ae0"/></svg>
<svg style="left:180.6px;top:331px" width="14" height="11" viewBox="0 0 14 11"><rect x="0" y="0" width="0.8" height="6.600" fill="#333"/><rect x="1.4" y="0" width="1.2" height="6.600" fill="#333"/><rect x="3.2" y="0" width="0.6" height="6.600" fill="#333"/><rect x="4.4" y="0" width="0.6" height="6.600" fill="#333"/><rect x="5.6" y="0" width="1.2" height="6.600" fill="#333"/><rect x="7.4" y="0" width="0.6" height="6.600" fill="#333"/><rect x="8.6" y="0" width="1.2" height="6.600" fill="#333"/><rect x="10.4" y="0" width="0.6" height="6.600" fill="#333"/><rect x="11.6" y="0" width="0.8" height="6.600" fill="#333"/><rect x="13" y="0" width="1" height="6.600" fill="#333"/><text x="7" y="10.400" text-anchor="middle" font-family="Liberation Sans" font-size="3.200" fill="#222" textLength="13">012345</text></svg>
<svg style="left:179.4px;top:349.8px" width="17" height="17" viewBox="0 0 17 17"><circle cx="8.400" cy="8.200" r="7.400" fill="#f6f6f6" stroke="#6a6a6a" stroke-width="1.500"/><circle cx="8.400" cy="8.200" r="6.200" fill="none" stroke="#c8c8c8" stroke-width="0.600"/><path d="M8.400 8.200l-2.400-2.600M8.400 8.200l4-1" stroke="#222" stroke-width="0.800"/><path d="M8.400 8.200l-4 5" stroke="#e03030" stroke-width="0.600"/></svg>
<svg style="left:184.4px;top:372.4px" width="7" height="16" viewBox="0 0 7 16"><rect x="0.300" y="0.300" width="6.400" height="15.400" rx="3.200" fill="#555"/><circle cx="3.500" cy="3.600" r="2.700" fill="#e8507a"/><circle cx="3.500" cy="8" r="2.700" fill="#f8e020"/><circle cx="3.500" cy="12.400" r="2.700" fill="#38b048"/></svg>
<svg style="left:182px;top:400.4px" width="12" height="6" viewBox="0 0 12 6"><path d="M1 0v6M1 3h3M4.400 0.400v5.200M4.400 0.600l6.800 4.800M11.200 0.400v5.200" fill="none" stroke="#333" stroke-width="0.900"/></svg>
<div class="a" style="left:200.6px;top:93px;width:691.2px;height:0.9px;background:#7e7e7e"></div>
<div class="a" style="left:201px;top:93.8px;width:679.6px;height:377.4px;background:#fff"></div>
<svg style="left:0;top:0" width="1036" height="561" viewBox="0 0 1036 561"><path d="M216.65 104.40V108M220.00 104.40V108M223.34 104.40V108M226.69 104.40V108M230.04 102.80V108M233.39 104.40V108M236.74 104.40V108M240.08 104.40V108M243.43 104.40V108M246.78 101.20V108M250.13 104.40V108M253.48 104.40V108M256.82 104.40V108M260.17 104.40V108M263.52 102.80V108M266.87 104.40V108M270.22 104.40V108M273.56 104.40V108M276.91 104.40V108M280.26 101.20V108M283.61 104.40V108M286.96 104.40V108M290.30 104.40V108M293.65 104.40V108M297.00 102.80V108M300.35 104.40V108M303.70 104.40V108M307.04 104.40V108M310.39 104.40V108M313.74 101.20V108M317.09 104.40V108M320.44 104.40V108M323.78 104.40V108M327.13 104.40V108M330.48 102.80V108M333.83 104.40V108M337.18 104.40V108M340.52 104.40V108M343.87 104.40V108M347.22 101.20V108M350.57 104.40V108M353.92 104.40V108M357.26 104.40V108M360.61 104.40V108M363.96 102.80V108M367.31 104.40V108M370.66 104.40V108M374.00 104.40V108M377.35 104.40V108M380.70 101.20V108M384.05 104.40V108M387.40 104.40V108M390.74 104.40V108M394.09 104.40V108M397.44 102.80V108M400.79 104.40V108M404.14 104.40V108M407.48 104.40V108M410.83 104.40V108M414.18 101.20V108M417.53 104.40V108M420.88 104.40V108M424.22 104.40V108M427.57 104.40V108M430.92 102.80V108M434.27 104.40V108M437.62 104.40V108M440.96 104.40V108M444.31 104.40V108M447.66 101.20V108M451.01 104.40V108M454.36 104.40V108M457.70 104.40V108M461.05 104.40V108M464.40 102.80V108M467.75 104.40V108M471.10 104.40V108M474.44 104.40V108M477.79 104.40V108M481.14 101.20V108M484.49 104.40V108M487.84 104.40V108M491.18 104.40V108M494.53 104.40V108M497.88 102.80V108M501.23 104.40V108M504.58 104.40V108M507.92 104.40V108M511.27 104.40V108M514.62 101.20V108M517.97 104.40V108M521.32 104.40V108M524.66 104.40V108M528.01 104.40V108M531.36 102.80V108M534.71 104.40V108M538.06 104.40V108M541.40 104.40V108M544.75 104.40V108M548.10 101.20V108M551.45 104.40V108M554.80 104.40V108M558.14 104.40V108M561.49 104.40V108M564.84 102.80V108M568.19 104.40V108M571.54 104.40V108M574.88 104.40V108M578.23 104.40V108M581.58 101.20V108M584.93 104.40V108M588.28 104.40V108M591.62 104.40V108M594.97 104.40V108M598.32 102.80V108M601.67 104.40V108M605.02 104.40V108M608.36 104.40V108M611.71 104.40V108M615.06 101.20V108M618.41 104.40V108M621.76 104.40V108M625.10 104.40V108M628.45 104.40V108M631.80 102.80V108M635.15 104.40V108M638.50 104.40V108M641.84 104.40V108M645.19 104.40V108M648.54 101.20V108M651.89 104.40V108M655.24 104.40V108M658.58 104.40V108M661.93 104.40V108M665.28 102.80V108M668.63 104.40V108M671.98 104.40V108M675.32 104.40V108M678.67 104.40V108M682.02 101.20V108M685.37 104.40V108M688.72 104.40V108M692.06 104.40V108M695.41 104.40V108M698.76 102.80V108M702.11 104.40V108M705.46 104.40V108M708.80 104.40V108M712.15 104.40V108M715.50 101.20V108M718.85 104.40V108M722.20 104.40V108M725.54 104.40V108M728.89 104.40V108M732.24 102.80V108M735.59 104.40V108M738.94 104.40V108M742.28 104.40V108M745.63 104.40V108M748.98 101.20V108M752.33 104.40V108M755.68 104.40V108M759.02 104.40V108M762.37 104.40V108M765.72 102.80V108M769.07 104.40V108M772.42 104.40V108M775.76 104.40V108M779.11 104.40V108M782.46 101.20V108M785.81 104.40V108M789.16 104.40V108M792.50 104.40V108M795.85 104.40V108M799.20 102.80V108M802.55 104.40V108M805.90 104.40V108M809.24 104.40V108M812.59 104.40V108M815.94 101.20V108M819.29 104.40V108M822.64 104.40V108M825.98 104.40V108M829.33 104.40V108M832.68 102.80V108M836.03 104.40V108M839.38 104.40V108M842.72 104.40V108M846.07 104.40V108M849.42 101.20V108M852.77 104.40V108M856.12 104.40V108M859.46 104.40V108M862.81 104.40V108M866.16 102.80V108M869.51 104.40V108M872.86 104.40V108M876.20 104.40V108" stroke="#202020" stroke-width="0.82" fill="none"/><path d="M215.600 108H878.600" stroke="#222" stroke-width="1.300"/><path d="M878.200 103.600V108.400" stroke="#222" stroke-width="0.900"/><path d="M211.80 468.64H215.400M211.80 465.30H215.400M211.80 461.95H215.400M208.80 458.60H215.400M211.80 455.25H215.400M211.80 451.90H215.400M211.80 448.56H215.400M211.80 445.21H215.400M210.40 441.86H215.400M211.80 438.51H215.400M211.80 435.16H215.400M211.80 431.82H215.400M211.80 428.47H215.400M208.80 425.12H215.400M211.80 421.77H215.400M211.80 418.42H215.400M211.80 415.08H215.400M211.80 411.73H215.400M210.40 408.38H215.400M211.80 405.03H215.400M211.80 401.68H215.400M211.80 398.34H215.400M211.80 394.99H215.400M208.80 391.64H215.400M211.80 388.29H215.400M211.80 384.94H215.400M211.80 381.60H215.400M211.80 378.25H215.400M210.40 374.90H215.400M211.80 371.55H215.400M211.80 368.20H215.400M211.80 364.86H215.400M211.80 361.51H215.400M208.80 358.16H215.400M211.80 354.81H215.400M211.80 351.46H215.400M211.80 348.12H215.400M211.80 344.77H215.400M210.40 341.42H215.400M211.80 338.07H215.400M211.80 334.72H215.400M211.80 331.38H215.400M211.80 328.03H215.400M208.80 324.68H215.400M211.80 321.33H215.400M211.80 317.98H215.400M211.80 314.64H215.400M211.80 311.29H215.400M210.40 307.94H215.400M211.80 304.59H215.400M211.80 301.24H215.400M211.80 297.90H215.400M211.80 294.55H215.400M208.80 291.20H215.400M211.80 287.85H215.400M211.80 284.50H215.400M211.80 281.16H215.400M211.80 277.81H215.400M210.40 274.46H215.400M211.80 271.11H215.400M211.80 267.76H215.400M211.80 264.42H215.400M211.80 261.07H215.400M208.80 257.72H215.400M211.80 254.37H215.400M211.80 251.02H215.400M211.80 247.68H215.400M211.80 244.33H215.400M210.40 240.98H215.400M211.80 237.63H215.400M211.80 234.28H215.400M211.80 230.94H215.400M211.80 227.59H215.400M208.80 224.24H215.400M211.80 220.89H215.400M211.80 217.54H215.400M211.80 214.20H215.400M211.80 210.85H215.400M210.40 207.50H215.400M211.80 204.15H215.400M211.80 200.80H215.400M211.80 197.46H215.400M211.80 194.11H215.400M208.80 190.76H215.400M211.80 187.41H215.400M211.80 184.06H215.400M211.80 180.72H215.400M211.80 177.37H215.400M210.40 174.02H215.400M211.80 170.67H215.400M211.80 167.32H215.400M211.80 163.98H215.400M211.80 160.63H215.400M208.80 157.28H215.400M211.80 153.93H215.400M211.80 150.58H215.400M211.80 147.24H215.400M211.80 143.89H215.400M210.40 140.54H215.400M211.80 137.19H215.400M211.80 133.84H215.400M211.80 130.50H215.400M211.80 127.15H215.400M208.80 123.80H215.400M211.80 120.45H215.400M211.80 117.10H215.400M211.80 113.76H215.400M211.80 110.41H215.400" stroke="#202020" stroke-width="0.82" fill="none"/><path d="M215.400 108.600V470.600" stroke="#222" stroke-width="1.300"/><path d="M201 108.700H216" stroke="#333" stroke-width="0.900"/><g font-family="Liberation Sans" font-size="6.800" fill="#222" text-anchor="middle"><clipPath id="rc"><rect x="215.900" y="93" width="663.200" height="16"/></clipPath><g clip-path="url(#rc)"><text x="222.2" y="100" text-anchor="end">-100</text><text x="247.18" y="100">-90</text><text x="280.66" y="100">-80</text><text x="314.14" y="100">-70</text><text x="347.62" y="100">-60</text><text x="381.10" y="100">-50</text><text x="414.58" y="100">-40</text><text x="448.06" y="100">-30</text><text x="481.54" y="100">-20</text><text x="515.02" y="100">-10</text><text x="548.50" y="100">0</text><text x="581.98" y="100">10</text><text x="615.46" y="100">20</text><text x="648.94" y="100">30</text><text x="682.42" y="100">40</text><text x="715.90" y="100">50</text><text x="749.38" y="100">60</text><text x="782.86" y="100">70</text><text x="816.34" y="100">80</text><text x="849.82" y="100">90</text><text x="875.4" y="100" text-anchor="start">100</text></g><text transform="translate(207.400 458.80) rotate(-90)" x="0" y="0">-50</text><text transform="translate(207.400 425.32) rotate(-90)" x="0" y="0">-40</text><text transform="translate(207.400 391.84) rotate(-90)" x="0" y="0">-30</text><text transform="translate(207.400 358.36) rotate(-90)" x="0" y="0">-20</text><text transform="translate(207.400 324.88) rotate(-90)" x="0" y="0">-10</text><text transform="translate(207.400 291.40) rotate(-90)" x="0" y="0">0</text><text transform="translate(207.400 257.92) rotate(-90)" x="0" y="0">10</text><text transform="translate(207.400 224.44) rotate(-90)" x="0" y="0">20</text><text transform="translate(207.400 190.96) rotate(-90)" x="0" y="0">30</text><text transform="translate(207.400 157.48) rotate(-90)" x="0" y="0">40</text><text transform="translate(207.400 124.00) rotate(-90)" x="0" y="0">50</text></g><path d="M863.900 94V108" stroke="#7c7c7c" stroke-width="1.500"/><path d="M364.300 101V111" stroke="#222" stroke-width="0.900"/><path d="M732.300 101V108.600" stroke="#222" stroke-width="1"/><path d="M364.300 147V471.400" stroke="#383838" stroke-width="0.950"/><rect x="731.600" y="111.800" width="4.400" height="359.400" fill="#808080"/><rect x="731.600" y="111.800" width="1.500" height="359.400" fill="#3a3a3a"/><circle cx="480.300" cy="239.200" r="79.500" fill="none" stroke="#3a3a3a" stroke-width="0.900"/></svg>
<div class="a" style="left:880.2px;top:93.8px;width:11.6px;height:377.7px;background:#f0f0f0"></div>
<div class="a" style="left:880.6px;top:275px;width:10.4px;height:13px;background:#cdcdcd"></div>
<div class="a" style="left:201px;top:471.5px;width:679.6px;height:11.7px;background:#f0f0f0"></div>
<div class="a" style="left:534.2px;top:472.2px;width:12px;height:10px;background:#cdcdcd"></div>
<div class="a" style="left:880.6px;top:471.2px;width:11.2px;height:12px;background:#f0f0f0"></div>
<div class="a" style="left:201px;top:483.2px;width:691px;height:0.8px;background:#e2e2e2"></div>
<svg style="left:882.6px;top:98.6px" width="6" height="4" viewBox="0 0 6 4"><path d="M0.400 3.600l2.500-2.600l2.500 2.600" stroke="#505050" stroke-width="1.300" fill="none"/></svg>
<svg style="left:882.6px;top:463px" width="6" height="4" viewBox="0 0 6 4"><path d="M0.400 0.400l2.500 2.600l2.500-2.600" stroke="#505050" stroke-width="1.300" fill="none"/></svg>
<svg style="left:204.6px;top:474.6px" width="4" height="6" viewBox="0 0 4 6"><path d="M3.600 0.400l-2.600 2.500l2.600 2.500" stroke="#505050" stroke-width="1.300" fill="none"/></svg>
<svg style="left:871px;top:474.6px" width="4" height="6" viewBox="0 0 4 6"><path d="M0.400 0.400l2.600 2.500l-2.600 2.500" stroke="#505050" stroke-width="1.300" fill="none"/></svg>
<div class="a" style="left:894.8px;top:67.5px;width:0.9px;height:460px;background:#b0b0b0"></div>
<div class="a" style="left:895.7px;top:67.5px;width:0.7px;height:460px;background:#fcfcfc"></div>
<div class="cap" style="left:899px;top:68.2px;width:109.8px;height:9.6px;"><span class="ui" style="letter-spacing:-0.38px">Marking parameter</span></div>
<svg style="left:1012.200px;top:71px" width="5" height="5" viewBox="0 0 5 5"><path d="M0.400 0.400l4.200 4.200M4.600 0.400l-4.200 4.200" stroke="#000" stroke-width="1.100"/></svg>
<div class="a" style="left:901px;top:94.2px;width:118px;height:103.6px;background:#fff;box-sizing:border-box;border:1px solid;border-color:#8c8c8c #e0e0e0 #e0e0e0 #8c8c8c;box-shadow:inset 1px 1px 0 #6a6a6a, inset -1px -1px 0 #f4f4f4"></div>
<div class="a" style="left:902.6px;top:95.8px;width:104.4px;height:11.6px;background:#f0f0f0"></div>
<div class="a" style="left:902.6px;top:107.2px;width:104.4px;height:0.9px;background:#9a9a9a"></div>
<div class="a" style="left:957.8px;top:96px;width:1px;height:11.4px;background:#8a8a8a"></div>
<div class="a" style="left:958.8px;top:96px;width:0.6px;height:11.4px;background:#fff"></div>
<div class="a" style="left:985.8px;top:96px;width:1px;height:11.4px;background:#8a8a8a"></div>
<div class="a" style="left:986.8px;top:96px;width:0.6px;height:11.4px;background:#fff"></div>
<div class="t ms" style="left:907px;top:97.4px;">Pen No.</div>
<div class="t ms" style="left:963.5px;top:97.4px;">Color</div>
<div class="a" style="left:991.3px;top:97px;width:14.2px;height:10px;overflow:hidden"><div class="t ms" style="left:0;top:0.400px">On/Off</div></div>
<div class="a" style="left:1007px;top:95.8px;width:10.6px;height:90.2px;background:#f0f0f0"></div>
<div class="a" style="left:1007.4px;top:108.2px;width:10.2px;height:12px;background:#cdcdcd"></div>
<svg style="left:1009.8px;top:100.4px" width="6" height="4" viewBox="0 0 6 4"><path d="M0.400 3.400l2.300-2.500l2.300 2.500" stroke="#505050" stroke-width="1.300" fill="none"/></svg>
<svg style="left:1009.8px;top:177px" width="6" height="4" viewBox="0 0 6 4"><path d="M0.400 0.400l2.300 2.500l2.300-2.500" stroke="#505050" stroke-width="1.300" fill="none"/></svg>
<div class="a" style="left:902.600px;top:108px;width:104.400px;height:78px;overflow:hidden">
<div class="a" style="left:8.800px;top:1.00px;width:47.400px;height:9.400px;background:#0078d7"></div>
<svg style="left:0.700px;top:2.00px" width="6.400" height="7.600" viewBox="0 0 6.400 6.800" preserveAspectRatio="none"><path d="M3.200 0v6.800M0 3.400h6.400M0.900 1l4.600 4.800M5.500 1l-4.600 4.800" stroke="#ff0000" stroke-width="0.800" fill="none"/></svg>
<div class="t ms" style="left:12px;top:2.20px;color:#fff">0 Default</div>
<div class="a" style="left:57.300px;top:1.90px;width:26.200px;height:8.500px;background:#000000;box-sizing:border-box;border:0.900px solid #222"></div>
<div class="t ms" style="left:89.200px;top:2.20px">On</div>
<svg style="left:0.700px;top:12.35px" width="6.400" height="7.600" viewBox="0 0 6.400 6.800" preserveAspectRatio="none"><path d="M3.200 0v6.800M0 3.400h6.400M0.900 1l4.600 4.800M5.500 1l-4.600 4.800" stroke="#ff0000" stroke-width="0.800" fill="none"/></svg>
<div class="t ms" style="left:12px;top:12.55px;">1 Default</div>
<div class="a" style="left:57.300px;top:12.25px;width:26.200px;height:8.500px;background:#0000ff;box-sizing:border-box;border:0.900px solid #222"></div>
<div class="t ms" style="left:89.200px;top:12.55px">On</div>
<svg style="left:0.700px;top:22.70px" width="6.400" height="7.600" viewBox="0 0 6.400 6.800" preserveAspectRatio="none"><path d="M3.200 0v6.800M0 3.400h6.400M0.900 1l4.600 4.800M5.500 1l-4.600 4.800" stroke="#ff0000" stroke-width="0.800" fill="none"/></svg>
<div class="t ms" style="left:12px;top:22.90px;">2 Default</div>
<div class="a" style="left:57.300px;top:22.60px;width:26.200px;height:8.500px;background:#ff0000;box-sizing:border-box;border:0.900px solid #222"></div>
<div class="t ms" style="left:89.200px;top:22.90px">On</div>
<svg style="left:0.700px;top:33.05px" width="6.400" height="7.600" viewBox="0 0 6.400 6.800" preserveAspectRatio="none"><path d="M3.200 0v6.800M0 3.400h6.400M0.900 1l4.600 4.800M5.500 1l-4.600 4.800" stroke="#ff0000" stroke-width="0.800" fill="none"/></svg>
<div class="t ms" style="left:12px;top:33.25px;">3 Default</div>
<div class="a" style="left:57.300px;top:32.95px;width:26.200px;height:8.500px;background:#00ff00;box-sizing:border-box;border:0.900px solid #222"></div>
<div class="t ms" style="left:89.200px;top:33.25px">On</div>
<svg style="left:0.700px;top:43.40px" width="6.400" height="7.600" viewBox="0 0 6.400 6.800" preserveAspectRatio="none"><path d="M3.200 0v6.800M0 3.400h6.400M0.900 1l4.600 4.800M5.500 1l-4.600 4.800" stroke="#ff0000" stroke-width="0.800" fill="none"/></svg>
<div class="t ms" style="left:12px;top:43.60px;">4 Default</div>
<div class="a" style="left:57.300px;top:43.30px;width:26.200px;height:8.500px;background:#ff00ff;box-sizing:border-box;border:0.900px solid #222"></div>
<div class="t ms" style="left:89.200px;top:43.60px">On</div>
<svg style="left:0.700px;top:53.75px" width="6.400" height="7.600" viewBox="0 0 6.400 6.800" preserveAspectRatio="none"><path d="M3.200 0v6.800M0 3.400h6.400M0.900 1l4.600 4.800M5.500 1l-4.600 4.800" stroke="#ff0000" stroke-width="0.800" fill="none"/></svg>
<div class="t ms" style="left:12px;top:53.95px;">5 Default</div>
<div class="a" style="left:57.300px;top:53.65px;width:26.200px;height:8.500px;background:#ffff00;box-sizing:border-box;border:0.900px solid #222"></div>
<div class="t ms" style="left:89.200px;top:53.95px">On</div>
<svg style="left:0.700px;top:64.10px" width="6.400" height="7.600" viewBox="0 0 6.400 6.800" preserveAspectRatio="none"><path d="M3.200 0v6.800M0 3.400h6.400M0.900 1l4.600 4.800M5.500 1l-4.600 4.800" stroke="#ff0000" stroke-width="0.800" fill="none"/></svg>
<div class="t ms" style="left:12px;top:64.30px;">6 Default</div>
<div class="a" style="left:57.300px;top:64.00px;width:26.200px;height:8.500px;background:#ff8080;box-sizing:border-box;border:0.900px solid #222"></div>
<div class="t ms" style="left:89.200px;top:64.30px">On</div>
<svg style="left:0.700px;top:74.45px" width="6.400" height="7.600" viewBox="0 0 6.400 6.800" preserveAspectRatio="none"><path d="M3.200 0v6.800M0 3.400h6.400M0.900 1l4.600 4.800M5.500 1l-4.600 4.800" stroke="#ff0000" stroke-width="0.800" fill="none"/></svg>
<div class="t ms" style="left:12px;top:74.65px;">7 Default</div>
<div class="a" style="left:57.300px;top:74.35px;width:26.200px;height:8.500px;background:#800000;box-sizing:border-box;border:0.900px solid #222"></div>
<div class="t ms" style="left:89.200px;top:74.65px">On</div>
</div>
<div class="a" style="left:902.6px;top:186px;width:104.4px;height:10.4px;background:#f0f0f0"></div>
<div class="a" style="left:915.2px;top:186.3px;width:68.8px;height:9.8px;background:#cdcdcd"></div>
<div class="a" style="left:1007px;top:186px;width:10.6px;height:10.4px;background:#f0f0f0"></div>
<svg style="left:906px;top:188.6px" width="4" height="6" viewBox="0 0 4 6"><path d="M3.400 0.400l-2.500 2.300l2.500 2.300" stroke="#505050" stroke-width="1.300" fill="none"/></svg>
<svg style="left:998px;top:188.6px" width="4" height="6" viewBox="0 0 4 6"><path d="M0.400 0.400l2.500 2.300l-2.500 2.300" stroke="#505050" stroke-width="1.300" fill="none"/></svg>
<div class="a" style="left:903.2px;top:201.2px;width:13.4px;height:14.6px;background:#000000"></div>
<div class="a" style="left:918.2px;top:201.2px;width:12.9px;height:14.6px;background:#0000ff"></div>
<div class="a" style="left:932.2px;top:201.2px;width:13px;height:14.6px;background:#ff0000"></div>
<div class="a" style="left:946.4px;top:201.2px;width:12.8px;height:14.6px;background:#00ff00"></div>
<div class="a" style="left:960.2px;top:201.2px;width:13.5px;height:14.6px;background:#ff00ff"></div>
<div class="a" style="left:974.8px;top:201.2px;width:13.2px;height:14.6px;background:#ffff00"></div>
<div class="a" style="left:989.4px;top:201.2px;width:12.5px;height:14.6px;background:#ff8080"></div>
<div class="a" style="left:1003.8px;top:201.2px;width:13.2px;height:14.6px;background:#800000"></div>
<div class="grp" style="left:901.2px;top:218.7px;width:117.6px;height:226px;"></div>
<div class="a" style="left:905px;top:224.2px;width:8.4px;height:8.4px;background:#fff;box-sizing:border-box;border:1px solid;border-color:#8c8c8c #f8f8f8 #f8f8f8 #8c8c8c;box-shadow:inset 0.700px 0.700px 0 #6c6c6c"></div>
<svg style="left:906.4px;top:225.79999999999998px" width="6" height="6" viewBox="0 0 6 6"><path d="M0.600 2.600l1.600 1.800l3-3.800" stroke="#000" stroke-width="1.300" fill="none"/></svg>
<div class="t ms" style="left:918.2px;top:225px;">Use default param</div>
<div class="lbl" style="left:903.200px;top:236.6px;width:66.800px;height:13.600px"><span class="ms">Current pen</span></div>
<div class="inp" style="left:973.200px;top:236.6px;width:42.600px;height:13.600px"><span class="ms " style="left:2px;top:2.200px">0</span></div>
<div class="lbl" style="left:903.200px;top:253.2px;width:66.800px;height:13.600px"><span class="ms">Loop Count</span></div>
<div class="inp" style="left:973.200px;top:253.2px;width:42.600px;height:13.600px"><span class="ms gr" style="left:2px;top:2.200px">1</span></div>
<div class="btn" style="left:1003.4px;top:254.6px;width:11px;height:5.4px;box-shadow:inset -0.700px -0.700px 0 #a0a0a0;border-color:#fff #7a7a7a #7a7a7a #fff"></div>
<div class="btn" style="left:1003.4px;top:260.0px;width:11px;height:5.4px;box-shadow:inset -0.700px -0.700px 0 #a0a0a0;border-color:#fff #7a7a7a #7a7a7a #fff"></div>
<svg style="left:1007.0px;top:256.2px" width="4" height="3" viewBox="0 0 4 3"><path d="M0 2.200l1.800-2l1.800 2z" fill="#9a9a9a"/></svg>
<svg style="left:1007.0px;top:261.59999999999997px" width="4" height="3" viewBox="0 0 4 3"><path d="M0 0.400l1.800 2l1.800-2z" fill="#9a9a9a"/></svg>
<div class="lbl" style="left:903.200px;top:269.8px;width:66.800px;height:13.600px"><span class="ms">Speed(MM/Second)</span></div>
<div class="inp" style="left:973.200px;top:269.8px;width:42.600px;height:13.600px"><span class="ms gr" style="left:2px;top:2.200px">1000</span></div>
<div class="btn" style="left:1003.4px;top:271.2px;width:11px;height:5.4px;box-shadow:inset -0.700px -0.700px 0 #a0a0a0;border-color:#fff #7a7a7a #7a7a7a #fff"></div>
<div class="btn" style="left:1003.4px;top:276.6px;width:11px;height:5.4px;box-shadow:inset -0.700px -0.700px 0 #a0a0a0;border-color:#fff #7a7a7a #7a7a7a #fff"></div>
<svg style="left:1007.0px;top:272.8px" width="4" height="3" viewBox="0 0 4 3"><path d="M0 2.200l1.800-2l1.800 2z" fill="#9a9a9a"/></svg>
<svg style="left:1007.0px;top:278.2px" width="4" height="3" viewBox="0 0 4 3"><path d="M0 0.400l1.800 2l1.800-2z" fill="#9a9a9a"/></svg>
<div class="lbl" style="left:903.200px;top:286.4px;width:66.800px;height:13.600px"><span class="ms">Power(%)</span></div>
<div class="inp" style="left:973.200px;top:286.4px;width:42.600px;height:13.600px"><span class="ms gr" style="left:2px;top:2.200px">30</span></div>
<div class="btn" style="left:1003.4px;top:287.79999999999995px;width:11px;height:5.4px;box-shadow:inset -0.700px -0.700px 0 #a0a0a0;border-color:#fff #7a7a7a #7a7a7a #fff"></div>
<div class="btn" style="left:1003.4px;top:293.2px;width:11px;height:5.4px;box-shadow:inset -0.700px -0.700px 0 #a0a0a0;border-color:#fff #7a7a7a #7a7a7a #fff"></div>
<svg style="left:1007.0px;top:289.4px" width="4" height="3" viewBox="0 0 4 3"><path d="M0 2.200l1.800-2l1.800 2z" fill="#9a9a9a"/></svg>
<svg style="left:1007.0px;top:294.79999999999995px" width="4" height="3" viewBox="0 0 4 3"><path d="M0 0.400l1.800 2l1.800-2z" fill="#9a9a9a"/></svg>
<div class="lbl" style="left:903.200px;top:303px;width:66.800px;height:13.600px"><span class="ms">Frequency(KHz)</span></div>
<div class="inp" style="left:973.200px;top:303px;width:42.600px;height:13.600px"><span class="ms gr" style="left:2px;top:2.200px">30</span></div>
<div class="btn" style="left:1003.4px;top:304.4px;width:11px;height:5.4px;box-shadow:inset -0.700px -0.700px 0 #a0a0a0;border-color:#fff #7a7a7a #7a7a7a #fff"></div>
<div class="btn" style="left:1003.4px;top:309.8px;width:11px;height:5.4px;box-shadow:inset -0.700px -0.700px 0 #a0a0a0;border-color:#fff #7a7a7a #7a7a7a #fff"></div>
<svg style="left:1007.0px;top:306px" width="4" height="3" viewBox="0 0 4 3"><path d="M0 2.200l1.800-2l1.800 2z" fill="#9a9a9a"/></svg>
<svg style="left:1007.0px;top:311.4px" width="4" height="3" viewBox="0 0 4 3"><path d="M0 0.400l1.800 2l1.800-2z" fill="#9a9a9a"/></svg>
<div class="lbl" style="left:903.200px;top:336.3px;width:66.800px;height:13.600px"><span class="ms">Start TC(US)</span></div>
<div class="inp" style="left:973.200px;top:336.3px;width:42.600px;height:13.600px"><span class="ms gr" style="left:2px;top:2.200px">-200</span></div>
<div class="btn" style="left:1003.4px;top:337.7px;width:11px;height:5.4px;box-shadow:inset -0.700px -0.700px 0 #a0a0a0;border-color:#fff #7a7a7a #7a7a7a #fff"></div>
<div class="btn" style="left:1003.4px;top:343.1px;width:11px;height:5.4px;box-shadow:inset -0.700px -0.700px 0 #a0a0a0;border-color:#fff #7a7a7a #7a7a7a #fff"></div>
<svg style="left:1007.0px;top:339.3px" width="4" height="3" viewBox="0 0 4 3"><path d="M0 2.200l1.800-2l1.800 2z" fill="#9a9a9a"/></svg>
<svg style="left:1007.0px;top:344.7px" width="4" height="3" viewBox="0 0 4 3"><path d="M0 0.400l1.800 2l1.800-2z" fill="#9a9a9a"/></svg>
<div class="lbl" style="left:903.200px;top:352.9px;width:66.800px;height:13.600px"><span class="ms">Laser Off TC(US)</span></div>
<div class="inp" style="left:973.200px;top:352.9px;width:42.600px;height:13.600px"><span class="ms gr" style="left:2px;top:2.200px">300</span></div>
<div class="btn" style="left:1003.4px;top:354.29999999999995px;width:11px;height:5.4px;box-shadow:inset -0.700px -0.700px 0 #a0a0a0;border-color:#fff #7a7a7a #7a7a7a #fff"></div>
<div class="btn" style="left:1003.4px;top:359.7px;width:11px;height:5.4px;box-shadow:inset -0.700px -0.700px 0 #a0a0a0;border-color:#fff #7a7a7a #7a7a7a #fff"></div>
<svg style="left:1007.0px;top:355.9px" width="4" height="3" viewBox="0 0 4 3"><path d="M0 2.200l1.800-2l1.800 2z" fill="#9a9a9a"/></svg>
<svg style="left:1007.0px;top:361.29999999999995px" width="4" height="3" viewBox="0 0 4 3"><path d="M0 0.400l1.800 2l1.800-2z" fill="#9a9a9a"/></svg>
<div class="lbl" style="left:903.200px;top:369.5px;width:66.800px;height:13.600px"><span class="ms">End TC(US)</span></div>
<div class="inp" style="left:973.200px;top:369.5px;width:42.600px;height:13.600px"><span class="ms gr" style="left:2px;top:2.200px">150</span></div>
<div class="btn" style="left:1003.4px;top:370.9px;width:11px;height:5.4px;box-shadow:inset -0.700px -0.700px 0 #a0a0a0;border-color:#fff #7a7a7a #7a7a7a #fff"></div>
<div class="btn" style="left:1003.4px;top:376.3px;width:11px;height:5.4px;box-shadow:inset -0.700px -0.700px 0 #a0a0a0;border-color:#fff #7a7a7a #7a7a7a #fff"></div>
<svg style="left:1007.0px;top:372.5px" width="4" height="3" viewBox="0 0 4 3"><path d="M0 2.200l1.800-2l1.800 2z" fill="#9a9a9a"/></svg>
<svg style="left:1007.0px;top:377.9px" width="4" height="3" viewBox="0 0 4 3"><path d="M0 0.400l1.800 2l1.800-2z" fill="#9a9a9a"/></svg>
<div class="lbl" style="left:903.200px;top:386.1px;width:66.800px;height:13.600px"><span class="ms">Polygon TC(US)</span></div>
<div class="inp" style="left:973.200px;top:386.1px;width:42.600px;height:13.600px"><span class="ms gr" style="left:2px;top:2.200px">100</span></div>
<div class="btn" style="left:1003.4px;top:387.5px;width:11px;height:5.4px;box-shadow:inset -0.700px -0.700px 0 #a0a0a0;border-color:#fff #7a7a7a #7a7a7a #fff"></div>
<div class="btn" style="left:1003.4px;top:392.90000000000003px;width:11px;height:5.4px;box-shadow:inset -0.700px -0.700px 0 #a0a0a0;border-color:#fff #7a7a7a #7a7a7a #fff"></div>
<svg style="left:1007.0px;top:389.1px" width="4" height="3" viewBox="0 0 4 3"><path d="M0 2.200l1.800-2l1.800 2z" fill="#9a9a9a"/></svg>
<svg style="left:1007.0px;top:394.5px" width="4" height="3" viewBox="0 0 4 3"><path d="M0 0.400l1.800 2l1.800-2z" fill="#9a9a9a"/></svg>
<div class="btn" style="left:937.7px;top:424px;width:24px;height:16.6px;"></div>
<svg style="left:939.4px;top:428.2px" width="21" height="8" viewBox="0 0 21 8"><g fill="none" stroke="#9a9a9a" stroke-width="0.700"><circle cx="3.800" cy="4" r="3.400"/><circle cx="8.200" cy="4" r="3.400"/><circle cx="12.600" cy="4" r="3.400"/><circle cx="17" cy="4" r="3.400"/></g></svg>
<div class="btn" style="left:964.5px;top:424px;width:52.6px;height:16.6px;"></div>
<div class="t ms dis" style="left:971.5px;top:428px;font-size:8.800px">Advance...</div>
<div class="btn" style="left:901.2px;top:449.7px;width:45.6px;height:13.8px;overflow:hidden"><div class="t ms dis" style="left:1.200px;top:2.600px;font-size:8.400px;letter-spacing:-0.200px">Param name</div></div>
<div class="inp" style="left:946.8px;top:449.7px;width:72px;height:13.8px;border-color:#b0b0b0 #fff #fff #b0b0b0;box-shadow:none"></div>
<div class="t ms" style="left:948.2px;top:452.6px;font-weight:bold;font-size:8.200px;letter-spacing:-0.300px">Default</div>
<div class="btn" style="left:901.2px;top:466px;width:118.4px;height:17.9px;"></div>
<div class="t ms dis" style="left:918.2px;top:470.6px;font-size:8.600px;letter-spacing:-0.100px">Select param from library</div>
<div class="btn" style="left:901.2px;top:484.6px;width:118.4px;height:18.2px;"></div>
<div class="t ms dis" style="left:933.2px;top:489.8px;font-size:8.800px">Apply to <u>d</u>efault</div>
<div class="a" style="left:21px;top:527px;width:1001px;height:0.9px;background:#a8a8a8"></div>
<div class="a" style="left:21px;top:527.9px;width:1001px;height:0.7px;background:#fbfbfb"></div>
<div class="btn" style="left:202px;top:491px;width:41.8px;height:30px;"></div>
<div class="t ms" style="left:208.7px;top:502px;">Red(F1)</div>
<div class="btn" style="left:246.2px;top:491px;width:40.8px;height:30px;border-color:#626262;box-shadow:inset 1px 1px 0 #fff, inset -1px -1px 0 #6e6e6e, inset -1.800px -1.800px 0 #a4a4a4"></div>
<div class="t ms" style="left:251px;top:502px;">Mark(F2)</div>
<div class="a" style="left:291.5px;top:493px;width:8.4px;height:8.4px;background:#fff;box-sizing:border-box;border:1px solid;border-color:#8c8c8c #f8f8f8 #f8f8f8 #8c8c8c;box-shadow:inset 0.700px 0.700px 0 #6c6c6c"></div>
<div class="a" style="left:291.5px;top:511px;width:8.4px;height:8.4px;background:#fff;box-sizing:border-box;border:1px solid;border-color:#8c8c8c #f8f8f8 #f8f8f8 #8c8c8c;box-shadow:inset 0.700px 0.700px 0 #6c6c6c"></div>
<div class="t ms" style="left:304.7px;top:493.8px;"><u>[C]</u>Continuous</div>
<div class="t ms" style="left:304.7px;top:511.8px;"><u>[S]</u>Mark Select</div>
<div class="t ms" style="left:362px;top:493.8px;">Part</div>
<div class="a" style="left:362px;top:511px;width:26px;height:10px;overflow:hidden"><div class="t ms" style="left:0;top:0.400px">Total num</div></div>
<div class="inp w" style="left:392.700px;top:490.500px;width:31.400px;height:13.600px"><span class="ms">0</span></div>
<div class="inp w" style="left:392.700px;top:506.700px;width:31.400px;height:13.600px"><span class="ms">0</span></div>
<div class="btn" style="left:426px;top:491px;width:13.6px;height:15.6px;"></div>
<div class="t ms" style="left:429.8px;top:495px;">R</div>
<div class="btn" style="left:441px;top:508px;width:41.4px;height:16px;"></div>
<div class="t ms" style="left:444.2px;top:511.8px;letter-spacing:-0.200px">Param(F3)</div>
<div class="inp" style="left:484.700px;top:490.500px;width:54.600px;height:13.600px;border-color:#9c9c9c #fbfbfb #fbfbfb #9c9c9c;box-shadow:inset 0.6px 0.6px 0 #a8a8a8"><span class="ms" style="left:0.6px">00:00:00</span></div>
<div class="inp" style="left:484.700px;top:508.500px;width:54.600px;height:13.600px;border-color:#9c9c9c #fbfbfb #fbfbfb #9c9c9c;box-shadow:inset 0.6px 0.6px 0 #a8a8a8"><span class="ms" style="left:0.6px">00:00:00</span></div>
<div class="a" style="left:541.8px;top:493px;width:8.4px;height:8.4px;background:#fff;box-sizing:border-box;border:1px solid;border-color:#8c8c8c #f8f8f8 #f8f8f8 #8c8c8c;box-shadow:inset 0.700px 0.700px 0 #6c6c6c"></div>
<div class="a" style="left:541.8px;top:511px;width:8.4px;height:8.4px;background:#fff;box-sizing:border-box;border:1px solid;border-color:#8c8c8c #f8f8f8 #f8f8f8 #8c8c8c;box-shadow:inset 0.700px 0.700px 0 #6c6c6c"></div>
<div class="t ms" style="left:555.5px;top:493.8px;">Show contour</div>
<div class="t ms" style="left:555.5px;top:511.8px;">Continue mode</div>
<div class="t ui" style="left:22.6px;top:533.7px;font-size:9.200px">Circle</div>
<div class="a" style="left:817px;top:529.600px;width:76.4px;height:12.400px;box-sizing:border-box;border:1px solid;border-color:#d4d4d4 #fff #fff #d4d4d4;overflow:hidden"><div class="t ui" style="left:0.600px;top:2.700px;font-size:9.200px;letter-spacing:-0.300px"><span style="padding-left:2px;letter-spacing:-0.42px">-99.461,9.914</span></div></div>
<div class="a" style="left:896.5px;top:529.600px;width:39.4px;height:12.400px;box-sizing:border-box;border:1px solid;border-color:#d4d4d4 #fff #fff #d4d4d4;overflow:hidden"><div class="t ui" style="left:0.600px;top:2.700px;font-size:9.200px;letter-spacing:-0.300px">Grid:Off</div></div>
<div class="a" style="left:939px;top:529.600px;width:39.4px;height:12.400px;box-sizing:border-box;border:1px solid;border-color:#d4d4d4 #fff #fff #d4d4d4;overflow:hidden"><div class="t ui" style="left:0.600px;top:2.700px;font-size:9.200px;letter-spacing:-0.300px">Guildline:Off</div></div>
<div class="a" style="left:981.3px;top:529.600px;width:40.7px;height:12.400px;box-sizing:border-box;border:1px solid;border-color:#d4d4d4 #fff #fff #d4d4d4;overflow:hidden"><div class="t ui" style="left:0.600px;top:2.700px;font-size:9.200px;letter-spacing:-0.300px">Object:Off</div></div>
<svg style="left:0;top:0" width="1036" height="561" viewBox="0 0 1036 561"><ellipse cx="199.200" cy="199.400" rx="27" ry="15.400" fill="none" stroke="#e6141e" stroke-width="1.800"/></svg>
<div class="a" style="left:184.3px;top:219.8px;width:47.2px;height:13.2px;background:#ffffe1;box-sizing:border-box;border:1px solid #6e6e6e;border-radius:1px;box-shadow:1px 1px 1.500px rgba(0,0,0,0.250)"></div>
<div class="t ui" style="left:187px;top:222px;font-size:9.000px;letter-spacing:-0.250px">Draw circle</div>
</body></html>
